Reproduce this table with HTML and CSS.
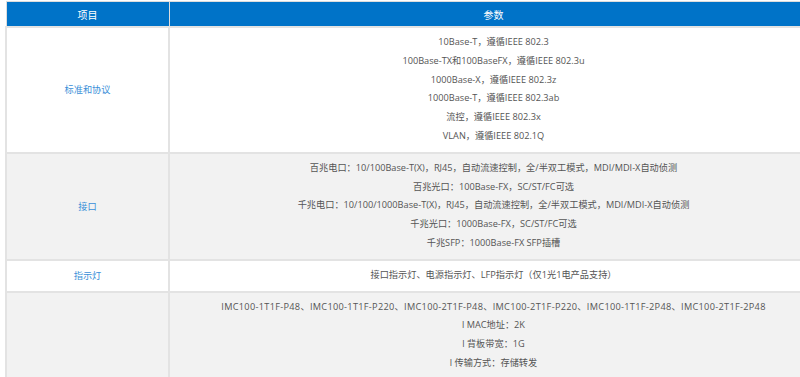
FILE: index.html
```html
<!DOCTYPE html>
<html lang="zh">
<head>
<meta charset="utf-8">
<title>参数</title>
<link rel="stylesheet" href="styles.css">
</head>
<body>
<div class="wrap">
<table class="spec">
  <colgroup><col class="c1"><col class="c2"></colgroup>
  <thead>
    <tr><th>项目</th><th>参数</th></tr>
  </thead>
  <tbody>
    <tr>
      <td class="label">标准和协议</td>
      <td class="val">
        <p>10Base-T，遵循IEEE 802.3</p>
        <p>100Base-TX和100BaseFX，遵循IEEE 802.3u</p>
        <p>1000Base-X，遵循IEEE 802.3z</p>
        <p>1000Base-T，遵循IEEE 802.3ab</p>
        <p>流控，遵循IEEE 802.3x</p>
        <p>VLAN，遵循IEEE 802.1Q</p>
      </td>
    </tr>
    <tr class="alt">
      <td class="label">接口</td>
      <td class="val">
        <p>百兆电口：10/100Base-T(X)，RJ45，自动流速控制，全/半双工模式，MDI/MDI-X自动侦测</p>
        <p>百兆光口：100Base-FX，SC/ST/FC可选</p>
        <p>千兆电口：10/100/1000Base-T(X)，RJ45，自动流速控制，全/半双工模式，MDI/MDI-X自动侦测</p>
        <p>千兆光口：1000Base-FX，SC/ST/FC可选</p>
        <p>千兆SFP：1000Base-FX SFP插槽</p>
      </td>
    </tr>
    <tr>
      <td class="label">指示灯</td>
      <td class="val"><p>接口指示灯、电源指示灯、LFP指示灯（仅1光1电产品支持）</p></td>
    </tr>
    <tr class="alt last">
      <td class="label"></td>
      <td class="val">
        <p class="wide">IMC100-1T1F-P48、IMC100-1T1F-P220、IMC100-2T1F-P48、IMC100-2T1F-P220、IMC100-1T1F-2P48、IMC100-2T1F-2P48</p>
        <p>l MAC地址：2K</p>
        <p>l 背板带宽：1G</p>
        <p>l 传输方式：存储转发</p>
      </td>
    </tr>
  </tbody>
</table>
</div>
</body>
</html>
```
FILE: styles.css
```css
html, body {
  margin: 0;
  padding: 0;
  background: #ffffff;
  overflow: hidden;
}
.wrap {
  padding: 1px 0 0 5px;
}
.spec {
  width: 814px;
  border-collapse: collapse;
  font-family: "Open Sans", "Noto Sans CJK SC", sans-serif;
  font-size: 9.2px;
  color: #555555;
  table-layout: fixed;
}
.c1 { width: 163px; }
.spec th {
  background: #0073c8;
  color: #ffffff;
  font-weight: normal;
  font-size: 10px;
  height: 24px;
  padding: 0;
  border: 1px solid #dddddd;
  border-bottom: 2px solid #e3e3e3;
  text-align: center;
  vertical-align: middle;
  font-family: "Noto Sans CJK SC", sans-serif;
}
.spec td {
  border: 2px solid #e3e3e3;
  text-align: center;
  vertical-align: middle;
  padding: 5px 4px 6px;
}
.spec .label {
  color: #3a8fd8;
  font-family: "Noto Sans CJK SC", sans-serif;
}
.spec .val p {
  margin: 0;
  line-height: 18.8px;
  white-space: nowrap;
}
.spec .val p.wide {
  letter-spacing: 0.3px;
}
.spec tr.alt td {
  background: #f2f2f2;
}
.spec tr.last td {
  vertical-align: top;
  height: 110px;
}
```
